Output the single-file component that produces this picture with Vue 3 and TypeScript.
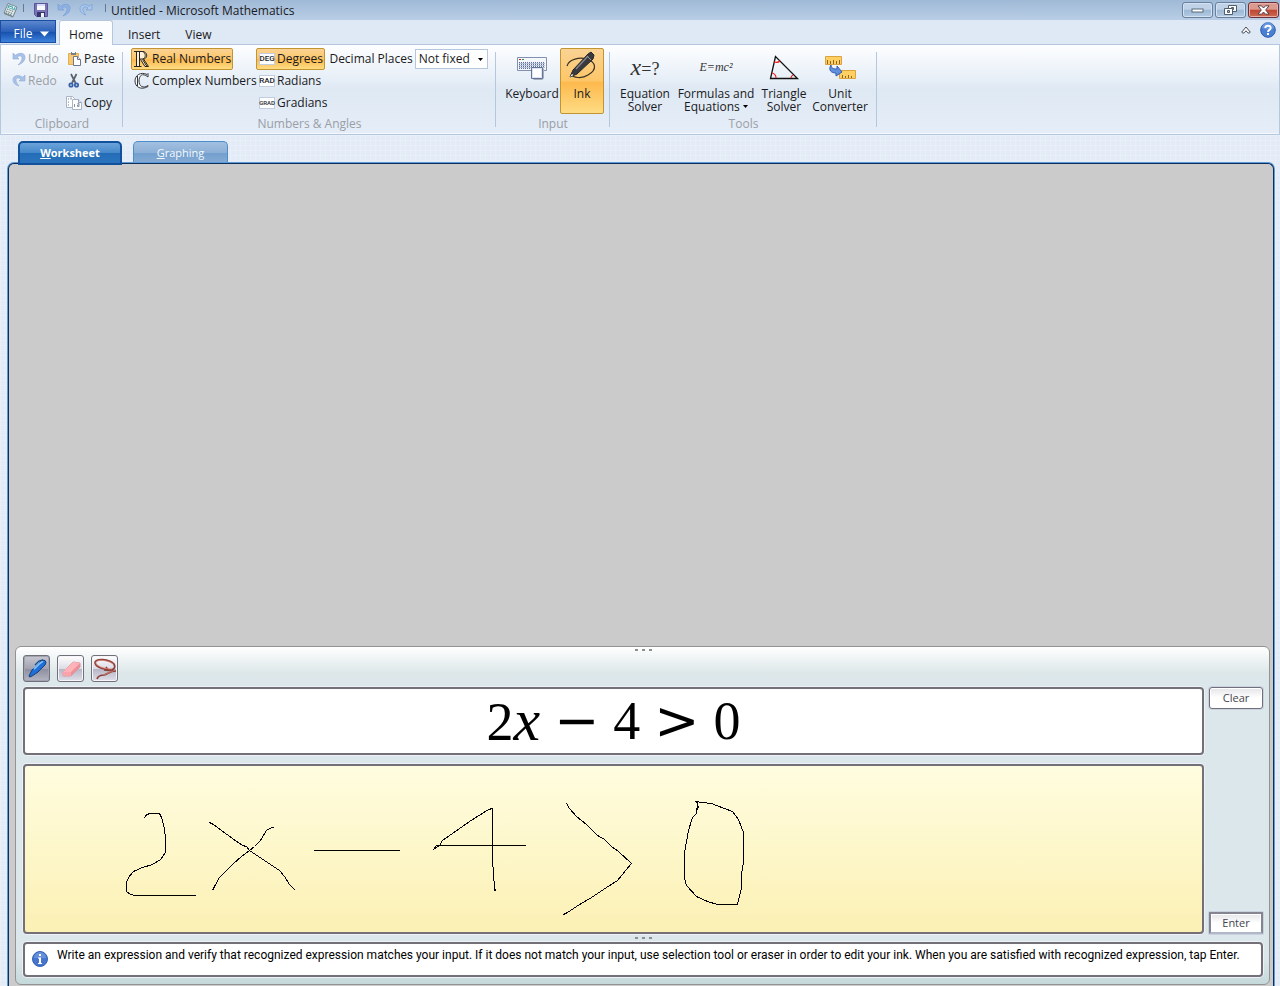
<script setup lang="ts">
import { ref } from 'vue'

const numberMode = ref<'real' | 'complex'>('real')
const angleUnit = ref('Degrees')
const decimals = ref('Not fixed')

const angleUnits = [
  { tag: 'DEG', label: 'Degrees' },
  { tag: 'RAD', label: 'Radians' },
  { tag: 'GRAD', label: 'Gradians' },
]

const strokes = [
  '145,818 146,815 150,813 160,813 162,817 165,828 166,838 166,852 161,859 153,864 143,867 134,871 129,877 127,882 127,891 131,894 136,895 196,895',
  '210,822 214,824 222,830 233,838 243,845 247,846 250,850 265,860 280,870 285,876 290,884 296,890',
  '274,827 272,827 267,830 261,840 255,846 250,850 242,856 233,864 220,877 215,886 213,890',
  '314,850 400,850',
  '493,808 489,809 470,821 453,833 443,840 440,845 434,849 437,845 526,845',
  '493,807 493,859 495,888 496,890 494,890',
  '567,803 570,808 577,816 587,824 598,835 605,839 612,846 619,851 632,863 627,869 618,880 607,887 592,897 577,906 568,912 564,914',
  '700,806 698,807 697,813 698,802 696,801 703,802 712,803 717,805 733,811 739,819 744,832 744,862 742,873 742,888 738,904 718,904 708,901 697,896 687,885 685,878 685,852 689,830 693,817 697,813',
]
</script>

<template>
  <div class="window">
    <header class="titlebar">
      <svg class="app-icon" width="17" height="17" viewBox="0 0 17 17">
        <path d="M6 2.500 15 6 11 15.500 2 12z" fill="#7d8b91" />
        <path d="M6 1.500 15 5 11 14.500 2 11z" fill="#dfe9e8" stroke="#68797f" stroke-width=".8" />
        <path d="M6.500 3 13.500 5.700 12.300 8.300 5.400 5.600z" fill="#45a9ac" />
        <path d="m5 7 6.500 2.500M4 9l6.500 2.600M3.500 10.700 9.500 13" stroke="#5f7379" stroke-width="1" stroke-dasharray="1.5 1" />
        <path d="m7 5 3 1M12 4l-1 3" stroke="#eaf7ff" />
      </svg>
      <span class="tick"></span>
      <button class="quick save" aria-label="Save">
        <svg width="14" height="14" viewBox="0 0 14 14">
          <path d="M.5.5h13v13h-11l-2-2z" fill="#7a73b5" stroke="#5a5496" />
          <path d="M3 1h8v6H3z" fill="#f8f9ff" />
          <path d="M3 1h8v2H3z" fill="#d5dcf3" />
          <path d="M3 9h8v5H3z" fill="#37366a" />
          <path d="M7 10h3v4H7z" fill="#f2f3fb" />
        </svg>
      </button>
      <button class="quick undo" aria-label="Undo last action">
        <svg width="14" height="14" viewBox="0 0 14 14">
          <path d="M1 1v6h6L5 5c3-2 5-1 5 1s-1 4-4 7c5-2 7-4 7-8S8 0 3.300 3.300z" fill="#8fb2e3" stroke="#7299d3" stroke-width=".6" />
        </svg>
      </button>
      <button class="quick redo" aria-label="Redo last action">
        <svg width="14" height="14" viewBox="0 0 14 14">
          <path d="M13 1v6H7l2-2C6 3 4 4 4 6s1 4 3 6C3 11 1 9 1 5.500S6 0 10.700 3.300z" fill="#a9c7ec" stroke="#7da2d7" stroke-width=".8" />
        </svg>
      </button>
      <span class="tick"></span>
      <h1>Untitled - Microsoft Mathematics</h1>
      <div class="controls">
        <button aria-label="Minimize">
          <svg width="13" height="5" viewBox="0 0 13 5"><rect x="1" y="1" width="11" height="3" fill="#fff" stroke="#5b6a7b" /></svg>
        </button>
        <button aria-label="Restore">
          <svg width="13" height="11" viewBox="0 0 13 11">
            <path d="M4.500.5h8v6h-8z" fill="#fff" stroke="#4f5c6b" />
            <path d="M7.500 2.500h2v2h-2z" fill="#9db7d3" stroke="#4f5c6b" />
            <path d="M.5 3.500h8v6h-8z" fill="#fff" stroke="#4f5c6b" />
            <path d="M3.500 5.500h2v2h-2z" fill="#9db7d3" stroke="#4f5c6b" />
          </svg>
        </button>
        <button class="close" aria-label="Close">
          <svg width="13" height="10" viewBox="0 0 13 10">
            <path d="M1 .8h3.500l2 2.200 2-2.200H12L8.700 5 12 9.200H8.500l-2-2.200-2 2.200H1L4.300 5z" fill="#fff" stroke="#583f48" />
          </svg>
        </button>
      </div>
    </header>

    <nav class="menu">
      <button class="file">File
        <svg width="9" height="6" viewBox="0 0 9 6"><path d="M0 .5h9L4.500 5.500z" fill="#fff" /></svg>
      </button>
      <button class="menu-tab active">Home</button>
      <button class="menu-tab">Insert</button>
      <button class="menu-tab">View</button>
      <div class="menu-end">
        <button class="plain" aria-label="Collapse ribbon">
          <svg width="10" height="8" viewBox="0 0 10 8"><path d="M.7 6.200 5 1l4.300 5.200-1.300 1-1.200-.4L5 4.800 3.200 6.800 2 7.200z" fill="#fff" stroke="#454b59" /></svg>
        </button>
        <button class="plain" aria-label="Help">
          <svg width="16" height="16" viewBox="0 0 16 16">
            <circle cx="8" cy="8" r="7.300" fill="#4b7fd3" stroke="#2d5cab" />
            <path d="M2 6a6 6 0 0 1 12 0q-6 3-12 0z" fill="#7ca5e6" opacity=".6" />
            <path d="M5.300 6C5.300 3 10.700 3 10.700 6c0 2-2.700 1.800-2.700 4" fill="none" stroke="#fff" stroke-width="1.900" />
            <rect x="7" y="11" width="2" height="2" fill="#fff" />
          </svg>
        </button>
      </div>
    </nav>

    <section class="ribbon" aria-label="Home ribbon">
      <div class="group clipboard">
        <div class="group-body">
          <div class="column history">
            <button class="small" disabled>
              <svg width="14" height="14" viewBox="0 0 14 14"><path d="M1 1v6h6L5 5c3-2 5-1 5 1s-1 4-4 7c5-2 7-4 7-8S8 0 3.300 3.300z" fill="#a9c1e7" stroke="#8eabd8" stroke-width=".6" /></svg>
              Undo
            </button>
            <button class="small" disabled>
              <svg width="14" height="14" viewBox="0 0 14 14"><path d="M13 1v6H7l2-2C6 3 4 4 4 6s1 4 3 6C3 11 1 9 1 5.500S6 0 10.700 3.300z" fill="#a9c1e7" stroke="#8eabd8" stroke-width=".6" /></svg>
              Redo
            </button>
          </div>
          <div class="column edit">
            <button class="small">
              <svg width="17" height="16" viewBox="-1 0 17 16">
                <path d="M1.500 2.500h10v11h-10z" fill="#f6c972" stroke="#e3ad50" />
                <path d="M4 1h5v3H4z" fill="#78808f" /><path d="M5 1h3v1H5z" fill="#fff" />
                <path d="M6.500 5.500h4l3 3v6h-7z" fill="#fff" stroke="#6d7890" />
                <path d="M10.500 5.500v3h3" fill="#d9e1ef" stroke="#6d7890" />
              </svg>
              Paste
            </button>
            <button class="small">
              <svg width="17" height="16" viewBox="0 0 17 16">
                <path d="m5 1 4.500 9M10.500 1 6 10" stroke="#58616e" stroke-width="1.700" />
                <circle cx="5" cy="12" r="1.700" fill="none" stroke="#355da6" stroke-width="1.700" />
                <circle cx="10.500" cy="12" r="1.700" fill="none" stroke="#355da6" stroke-width="1.700" />
              </svg>
              Cut
            </button>
            <button class="small">
              <svg width="17" height="16" viewBox="0 0 17 16">
                <path d="M.5 1.500h6l2 2v9h-8z" fill="#fff" stroke="#a9b4c9" />
                <path d="M5 2.500v2M2 4h1M2 7h1M2 10h1" stroke="#717b8d" />
                <path d="M6.500 4.500h6l3 3v7h-9z" fill="#fff" stroke="#a9b4c9" />
                <path d="M12.500 4.500v3h3" fill="#d9e1ef" stroke="#98a3b9" />
                <path d="M8.500 9v3M11.500 8.500h1.500v3h-1.500v-1.500h1.500" fill="none" stroke="#8993a7" />
              </svg>
              Copy
            </button>
          </div>
        </div>
        <h2>Clipboard</h2>
      </div>

      <div class="group numbers">
        <div class="group-body">
          <div class="column modes">
            <button class="small" :class="{ chosen: numberMode === 'real' }" @click="numberMode = 'real'">
              <svg width="16" height="18" viewBox="0 0 16 18">
                <path d="M3 1.500h5c6 0 6 7 1 7.500l4.500 7H11L6 9.500V16H3z" fill="#fff" opacity=".7" />
                <path d="M0 1.500h8c6 0 6 7 1.500 7.500l5 7.500H11L6.500 9.500M0 16.500h7.500M2.500 1.500v15M5.500 1.500v15M6 9h3c3-1 3-6 0-7.500M8.500 9.500l4.500 7" fill="none" stroke="#26241d" />
              </svg>
              Real Numbers
            </button>
            <button class="small" :class="{ chosen: numberMode === 'complex' }" @click="numberMode = 'complex'">
              <svg width="16" height="18" viewBox="0 0 16 18">
                <path d="M14 5V1.500l-1 1C7-.5 1 3 1 9s6 9.500 13 5.500v-1C9 17 5 14 5 9s3-9 9-4M3.500 4v10" fill="#fff" stroke="#343941" />
              </svg>
              Complex Numbers
            </button>
          </div>
          <div class="column">
            <button v-for="u in angleUnits" :key="u.tag" class="small angle" :class="{ chosen: angleUnit === u.label }" @click="angleUnit = u.label">
              <span class="tag" :class="{ tight: u.tag.length > 3 }">{{ u.tag }}</span>{{ u.label }}
            </button>
          </div>
          <div class="decimal">
            <label for="places">Decimal Places</label>
            <span class="select-wrap">
              <select id="places" v-model="decimals">
                <option>Not fixed</option>
                <option>2</option>
                <option>4</option>
              </select>
              <svg width="5" height="3" viewBox="0 0 5 3"><path d="M0 0h5L2.500 3z" /></svg>
            </span>
          </div>
        </div>
        <h2>Numbers &amp; Angles</h2>
      </div>

      <div class="group input">
        <div class="group-body">
          <button class="large keyboard">
            <svg width="32" height="32" viewBox="0 0 32 32">
              <path d="M1.500 6.500h29v13h-29z" fill="#f4f7fc" stroke="#8190ae" />
              <path d="M3 8.500h2" stroke="#d42020" /><path d="M6 8.500h2" stroke="#2b9938" />
              <path d="M3 11.500h26M3 13.500h26M3 15.500h26M3 17.500h11" stroke="#5d6f99" stroke-dasharray="1 1" />
              <path d="M3 12.500h26M3 14.500h26M3 16.500h26" stroke="#b3bfd9" />
              <path d="M17.500 28.500h9l1-1v-10" fill="none" stroke="#a5adbd" />
              <path d="M15.500 16.500h11v11h-11z" fill="#dbe5f6" stroke="#647697" />
              <path d="M17 18h8v8h-8z" fill="#fff" />
            </svg>
            Keyboard
          </button>
          <button class="large ink chosen">
            <svg width="32" height="32" viewBox="0 0 32 32">
              <path d="M1 15C3 8 14 6 20 8c11 3 11 11 2 16-6 4-15 3-17-1" fill="none" stroke="#3c3323" stroke-width="1.200" />
              <path d="M7 19 22 3l3-2 3 3-1 4L11 23 4 26z" fill="#3a3a3e" stroke="#25262b" />
              <path d="m10 18 12-13" stroke="#85878b" stroke-width="1.300" />
              <path d="m21 5 4 4" stroke="#97999d" /><path d="m4 26 2-3 1.500 1z" fill="#fff" />
            </svg>
            Ink
          </button>
        </div>
        <h2>Input</h2>
      </div>

      <div class="group tools">
        <div class="group-body">
          <button class="large equation"><span class="formula big"><i>x</i>=?</span><span>Equation<br />Solver</span></button>
          <button class="large formulas"><span class="formula"><i>E=mc²</i></span><span>Formulas and<br />Equations
            <svg class="caret" width="5" height="3" viewBox="0 0 5 3"><path d="M0 0h5L2.500 3z" /></svg></span>
          </button>
          <button class="large triangle">
            <svg width="32" height="32" viewBox="0 0 32 32">
              <path d="M7.500 5.500 2.500 27.500h27z" fill="none" stroke="#111" stroke-width="1.300" />
              <path d="M6 11q4 1 6-1M4 22q4 1 4 5M25 24q-2 1-2 3" fill="none" stroke="#ef1c1c" stroke-width="1.200" />
            </svg>
            <span>Triangle<br />Solver</span>
          </button>
          <button class="large unit">
            <svg width="32" height="32" viewBox="0 0 32 32">
              <path d="M1.500 5.500h16v8h-16z" fill="#ffcf62" stroke="#dba33d" />
              <path d="M3.500 13V9M6.500 13v-3M9.500 13V9M12.500 13v-3M15.500 13V9" stroke="#8b6728" />
              <path d="M15.500 19.500h16v8h-16z" fill="#ffcf62" stroke="#dba33d" />
              <path d="M18.500 27v-3M21.500 27v-2M24.500 27v-3M27.500 27v-2" stroke="#8b6728" />
              <path d="M7 14c0 3 2 4 6 4v-3l5 6-6 4v-3c-5 0-8-3-5-8z" fill="#608fe0" stroke="#315cae" />
            </svg>
            <span>Unit<br />Converter</span>
          </button>
        </div>
        <h2>Tools</h2>
      </div>
    </section>

    <main class="workspace">
      <div class="sheet-tabs" role="tablist">
        <button class="sheet-tab current" role="tab" aria-selected="true"><u>W</u>orksheet</button>
        <button class="sheet-tab" role="tab" aria-selected="false"><u>G</u>raphing</button>
      </div>
      <div class="sheet">
        <div class="history-area"></div>
        <section class="ink-panel" aria-label="Ink input">
          <div class="grip"><i></i><i></i><i></i></div>
          <div class="ink-tools">
            <button class="tool pressed" aria-label="Pen">
              <svg width="24" height="24" viewBox="0 0 24 24">
                <path d="m4 19 3-6 8-8q3-3 5-1.500t0 4.500l-7 7-6 4q-3 2-3 0z" fill="#1f6fd6" stroke="#123f7d" />
                <path d="m9 12 5-5 4-3" fill="none" stroke="#7cc0ff" stroke-width="1.800" />
                <path d="m10 8 4-4 4-1" fill="none" stroke="#174a8c" stroke-width="1.300" />
              </svg>
            </button>
            <button class="tool" aria-label="Eraser">
              <svg width="24" height="24" viewBox="0 0 24 24">
                <path d="m4 15 10-10 7 1v4l-9 9-8 0z" fill="#ee8f98" stroke="#d99aa2" />
                <path d="m4 15 10-10 7 1-9 9z" fill="#ffb3b8" /><path d="M4 15h8v4H4z" fill="#f9a4aa" />
              </svg>
            </button>
            <button class="tool" aria-label="Select">
              <svg width="24" height="24" viewBox="0 0 24 24">
                <path d="M20 13C11 13 2 10 2 5.500 3 1 16 2 21 7c3 6-4 7-10 6M23 14c-6 0-8 3-12 4-4 0-6 1-7 4m9-12 2 3" fill="none" stroke="#8f4038" stroke-width="1.700" />
                <path d="M19 12C11 12 3 9 3 5.500 4 2 15 3 20 7M20 14.500c-4 0-6 3-9 3" fill="none" stroke="#d98070" stroke-width=".8" />
              </svg>
            </button>
          </div>
          <div class="entry">
            <div class="boxes">
              <div class="box recognized" role="math">
                <span>2<i>x</i></span><span class="op">−</span><span>4</span><span class="op">&gt;</span><span>0</span>
              </div>
              <div class="box canvas">
                <svg width="760" height="166" viewBox="26 766 760 166" aria-label="Handwritten expression">
                  <g transform="translate(.5 .5)" fill="none" stroke="#000" shape-rendering="crispEdges">
                    <polyline v-for="s in strokes" :key="s" :points="s" />
                  </g>
                </svg>
              </div>
            </div>
            <div class="actions">
              <button class="action">Clear</button>
              <button class="action enter">Enter</button>
            </div>
          </div>
          <div class="grip lower"><i></i><i></i><i></i></div>
          <div class="box info">
            <svg width="16" height="16" viewBox="0 0 16 16">
              <circle cx="8" cy="8" r="7.500" fill="#4775cd" stroke="#3261b5" />
              <path d="M2 7a6 6 0 0 1 12 0z" fill="#79a1e6" opacity=".6" />
              <path d="M7 3h2v2H7zM6 6.500h3V12h1v1H6v-1h1V7.500H6z" fill="#fff" />
            </svg>
            <p>Write an expression and verify that recognized expression matches your input. If it does not match your input, use selection tool or eraser in order to edit your ink. When you are satisfied with recognized expression, tap Enter.</p>
          </div>
        </section>
      </div>
    </main>
  </div>
</template>

<style>
body {
  margin: 0;
}
</style>

<style scoped>
* {
  box-sizing: border-box;
}
.window {
  display: flex;
  flex-direction: column;
  min-height: 100vh;
  font: 12px/14px "Segoe UI", "Open Sans", sans-serif;
  color: #1a1a22;
  background: #e3ebf7;
}
button,
select {
  font: inherit;
  color: inherit;
  margin: 0;
  padding: 0;
  border: 0;
  background: none;
}
svg {
  flex: none;
}
h1,
h2,
p {
  margin: 0;
  font: inherit;
}
.titlebar {
  display: flex;
  align-items: center;
  height: 20px;
  padding: 0 1px 0 2px;
  background: linear-gradient(#9fb9d6, #b9cee6);
}
.tick {
  width: 1px;
  height: 8px;
  margin: 0 0 4px 4px;
  background: #66798f;
}
.quick {
  display: flex;
  width: 14px;
}
.save {
  margin-left: 10px;
}
.undo {
  margin-left: 9px;
}
.redo {
  margin: 0 8px;
}
h1 {
  margin-left: 5px;
  padding-top: 2px;
  line-height: 20px;
}
.controls {
  display: flex;
  gap: 2px;
  margin-left: auto;
  align-self: flex-start;
}
.controls button {
  display: flex;
  align-items: center;
  justify-content: center;
  width: 31px;
  height: 16px;
  margin-top: 2px;
  border: 1px solid #66809e;
  border-radius: 3px;
  box-shadow: inset 0 0 0 1px #d4e2f1;
  background: linear-gradient(#bfd2e8 45%, #9cb8d5 50%, #b5cbe2);
}
.controls .close {
  border-color: #6b3039;
  box-shadow: inset 0 0 0 1px #e6b0a8;
  background: linear-gradient(#dc9a8f 45%, #bf4531 50%, #cc6b52);
}
.menu {
  display: flex;
  height: 25px;
  border-bottom: 1px solid #b4c7dc;
  background: #dfe9f5;
}
.file {
  display: flex;
  align-items: center;
  justify-content: center;
  gap: 7px;
  width: 56px;
  height: 23px;
  padding: 4px 0 0 6px;
  color: #fff;
  border: 1px solid #1b4da3;
  background: linear-gradient(#5b87cd, #2c60b8 50%, #1650ad 52%, #3d82dc);
}
.menu-tab {
  padding: 5px 12px 0 13px;
}
.menu-tab.active {
  width: 54px;
  height: 25px;
  margin: 0 2px 0 3px;
  padding: 4px 0 0;
  border: 1px solid #b4c7dc;
  border-bottom: 0;
  border-radius: 3px 3px 0 0;
  background: #fcfdff;
}
.menu-end {
  display: flex;
  align-items: center;
  gap: 9px;
  margin-left: auto;
  padding: 0 4px 4px 0;
}
.plain {
  display: flex;
}
.ribbon {
  display: flex;
  height: 90px;
  padding-top: 3px;
  border: 1px solid #b4c7dc;
  border-top: 0;
  box-shadow: inset 0 -1px #f4f8fc;
  background: linear-gradient(#fdfeff, #eff4fa 25%, #dfe9f4 50%, #e4edf8);
}
.group {
  position: relative;
  display: flex;
  flex-direction: column;
}
.group::after {
  content: "";
  position: absolute;
  top: 4px;
  right: 0;
  width: 1px;
  height: 75px;
  background: #b4c7dc;
}
.group-body {
  display: flex;
  height: 69px;
}
.group h2 {
  text-align: center;
  color: #9a9ea5;
}
.clipboard {
  width: 122px;
}
.clipboard .group-body {
  padding-left: 10px;
}
.column {
  display: flex;
  flex-direction: column;
  align-items: flex-start;
}
.history {
  width: 54px;
}
.small {
  display: flex;
  align-items: center;
  gap: 2px;
  height: 22px;
  white-space: nowrap;
  border: 1px solid transparent;
  border-radius: 2px;
}
.small:disabled {
  color: #9a9ea5;
}
.edit .small {
  gap: 1px;
}
.small.chosen,
.large.chosen {
  border: 1px solid #c39530;
  border-radius: 2px;
  background: linear-gradient(#fbd394, #fdc667 50%, #fdb94d 52%, #fedc84);
}
.numbers {
  width: 373px;
}
.numbers .group-body {
  padding-left: 8px;
}
.modes {
  width: 125px;
}
.modes .small {
  padding: 0 1px 0 2px;
}
.angle {
  padding: 0 1px 0 2px;
}
.tag {
  width: 16px;
  height: 12px;
  font: 500 8px/10px Roboto, sans-serif;
  text-align: center;
  color: #22252c;
  border: 1px solid #c3cde0;
  background: #fff;
  display: flex;
  justify-content: center;
}
.tight {
  font-size: 6px;
}
.decimal {
  display: flex;
  align-items: center;
  gap: 2px;
  height: 22px;
  margin-left: auto;
  padding-right: 8px;
  white-space: nowrap;
}
.select-wrap {
  position: relative;
  display: flex;
}
select {
  appearance: none;
  width: 73px;
  height: 20px;
  padding-left: 3px;
  border: 1px solid #b4c7dc;
  border-radius: 0;
  background: #fff;
}
.numbers .decimal {
  padding-right: 10px;
}
.select-wrap svg {
  position: absolute;
  top: 9px;
  right: 5px;
  pointer-events: none;
}
.input {
  width: 114px;
}
.input .group-body {
  padding-left: 8px;
}
.large {
  display: flex;
  flex-direction: column;
  align-items: center;
  height: 66px;
  line-height: 13px;
  white-space: nowrap;
  border: 1px solid transparent;
}
.large > svg:first-child {
  margin: 2px 0 4px;
}
.keyboard {
  width: 56px;
}
.ink {
  width: 44px;
}
.tools {
  width: 267px;
}
.tools .group-body {
  padding-left: 4px;
}
.equation {
  width: 62px;
}
.formulas {
  width: 80px;
}
.triangle {
  width: 56px;
}
.unit {
  width: 56px;
}
.formula {
  height: 38px;
  font: 12px/36px "Liberation Serif", serif;
  color: #333;
}
.big {
  font-size: 18px;
}
.big i {
  font-size: 24px;
}
.caret {
  vertical-align: 3px;
}
.workspace {
  display: flex;
  flex: 1;
  flex-direction: column;
  padding: 6px 6px 0 8px;
  background-color: #e3ebf7;
  background-image: linear-gradient(#e8eff9 1px, transparent 1px), linear-gradient(90deg, #e8eff9 1px, transparent 1px);
  background-size: 5px 5px;
}
.sheet-tabs {
  display: flex;
  gap: 11px;
  padding-left: 10px;
}
.sheet-tab {
  width: 95px;
  height: 22px;
  font-size: 11px;
  color: #f4f8fd;
  border: 1px solid #4e8dcc;
  border-bottom: 0;
  border-radius: 5px 5px 0 0;
  background: linear-gradient(#a2bfdf, #8db0d7 50%, #729fce 52%, #86abd4);
}
.current {
  z-index: 1;
  width: 104px;
  height: 24px;
  margin-bottom: -2px;
  font-weight: bold;
  color: #fff;
  border: 2px solid #11509a;
  background: linear-gradient(#6ca3da, #4588cb 50%, #246cb7 52%, #2b74bd);
}
.sheet {
  display: flex;
  flex: 1;
  flex-direction: column;
  padding: 0 3px 1px 6px;
  border: solid #0c2f5c;
  border-width: 1px 1px 0;
  border-radius: 6px 6px 0 0;
  box-shadow: 0 0 0 1px #5f9bd8;
  background: #cbcbcb;
}
.history-area {
  flex: 1;
}
.ink-panel {
  padding: 0 6px 7px 7px;
  border: 1px solid #939393;
  border-radius: 6px;
  box-shadow: inset 0 1px #fff;
  background: linear-gradient(#fff, #dde7e9 26px, #dce7ec 36px, #dce7ec 310px, #c5d9da);
}
.grip {
  display: flex;
  justify-content: center;
  gap: 4px;
  height: 8px;
  padding-top: 2px;
}
.grip i {
  width: 3px;
  height: 2px;
  background: #8d9092;
}
.ink-tools {
  display: flex;
  gap: 7px;
  margin-bottom: 5px;
}
.tool {
  display: flex;
  align-items: center;
  justify-content: center;
  width: 27px;
  height: 27px;
  border: 1px solid #706f7a;
  border-radius: 3px;
  box-shadow: inset 0 0 0 1px #f5f5fa;
  background: linear-gradient(#fff, #dcdce6 50%, #b7b7c7 54%, #e0e0ea);
}
.tool.pressed {
  box-shadow: inset 0 0 0 1px #a2a3b0;
  background: linear-gradient(#c7c8d1, #a2a3b0 50%, #8e8f9f 54%, #b5b6c3);
}
.entry {
  display: flex;
  gap: 5px;
}
.boxes {
  display: flex;
  flex: 1;
  flex-direction: column;
  gap: 9px;
}
.box {
  border: 2px solid #737078;
  border-radius: 4px;
  box-shadow: 0 0 0 1px #eef1f7;
  background: #fff;
}
.recognized {
  display: flex;
  align-items: center;
  justify-content: center;
  gap: 14px;
  height: 68px;
  font: 54px/64px "Cambria Math", "Liberation Serif", serif;
  color: #000;
}
.recognized i {
  font-size: 60px;
}
.op {
  font-family: "DejaVu Sans", sans-serif;
}
.canvas {
  height: 170px;
  overflow: hidden;
  background: linear-gradient(#fffde0, #fbf0b4);
}
.canvas svg {
  display: block;
}
.actions {
  display: flex;
  flex-direction: column;
  justify-content: space-between;
}
.action {
  width: 54px;
  height: 22px;
  font-size: 11px;
  color: #44434c;
  border: 1px solid #706f7a;
  border-radius: 3px;
  box-shadow: inset 0 0 0 1px #fff, 0 0 0 1px #c9d0de;
  background: linear-gradient(#e5e5ea, #fff 50%);
}
.enter {
  border: 2px solid #858491;
  border-radius: 1px;
  border-bottom-color: #b0b8c8;
}
.lower {
  padding-top: 3px;
}
.info {
  display: flex;
  gap: 9px;
  min-height: 35px;
  padding: 4px 7px 5px;
  font-family: "Segoe UI", Roboto, sans-serif;
  color: #000;
}
.info svg {
  margin-top: 3px;
}
</style>
